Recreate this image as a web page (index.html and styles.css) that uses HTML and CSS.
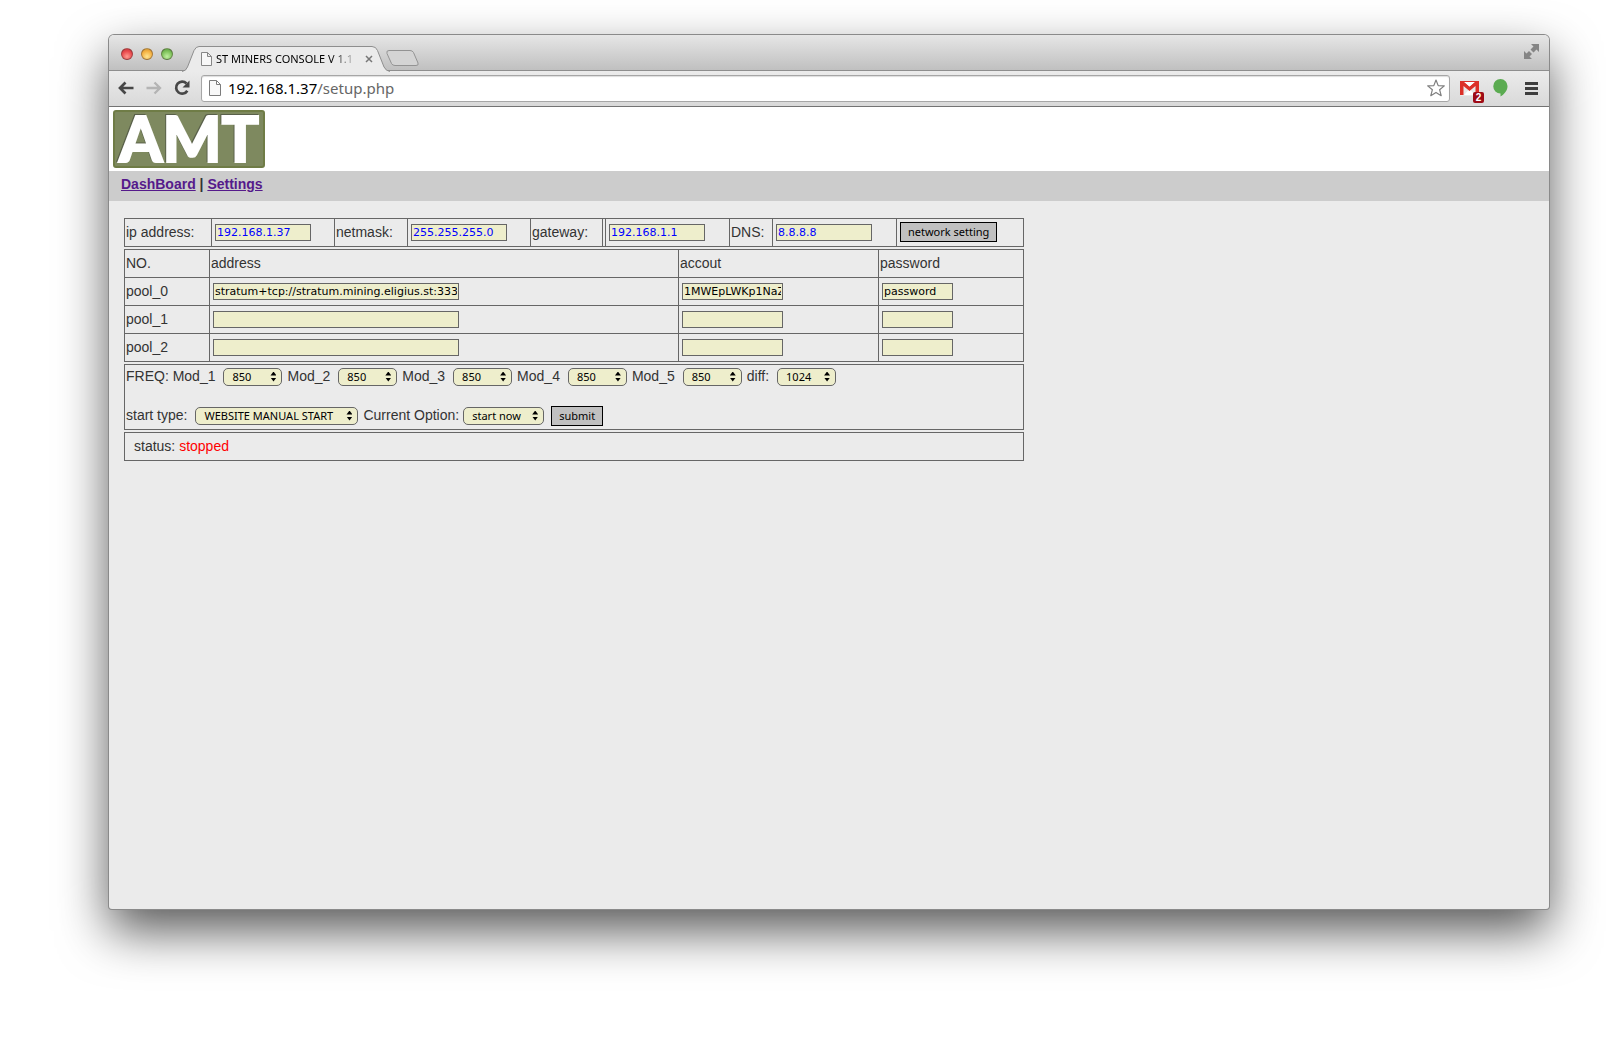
FILE: index.html
```
<!DOCTYPE html>
<html lang="en">
<head>
    <meta charset="UTF-8">
    <meta name="viewport" content="width=device-width, initial-scale=1.0">
    <title>ST MINERS CONSOLE V 1.1</title>
    <link rel="stylesheet" href="styles.css">
</head>
<body>
    <div class="window">
        <div class="titlebar">
            <div class="lights">
                <button class="light red" aria-label="Close window"></button>
                <button class="light yellow" aria-label="Minimize window"></button>
                <button class="light green" aria-label="Zoom window"></button>
            </div>
            <div class="tab">
                <svg class="tab-shape" width="208" height="26" viewBox="0 0 208 26">
                    <path d="M0 25.5 Q4 25 5.500 21 L12 4.500 Q14 .5 17 .5 H190 Q194 .5 195.500 4.500 L202 21 Q204 25 208 25.500 V26 H0 Z" fill="#ebebeb"/>
                    <path d="M0 25.5 Q4 25 5.500 21 L12 4.500 Q14 .5 17 .5 H190 Q194 .5 195.500 4.500 L202 21 Q204 25 208 25.500" fill="none" stroke="#8e8e8e"/>
                </svg>
                <svg class="tab-page" width="11" height="14" viewBox="0 0 11 14">
                    <path d="M.5 .5 H6.500 L10.500 4.500 V13.500 H.5 Z M6.500 .5 V4.500 H10.500" fill="#f7f7f7" stroke="#868686"/>
                </svg>
                <span class="tab-title">ST MINERS CONSOLE V 1.1</span>
                <button class="tab-close" aria-label="Close tab">
                    <svg width="8" height="8" viewBox="0 0 8 8"><path d="M1 1 L7 7 M7 1 L1 7" stroke="#777" stroke-width="1.500"/></svg>
                </button>
            </div>
            <button class="new-tab" aria-label="New tab">
                <svg width="33" height="17" viewBox="0 0 33 17">
                    <path d="M3 .5 H24 Q26.500 .5 27.500 2.500 L32 13 Q33 15.500 30 15.500 H9 Q6.500 15.500 5.500 13.500 L1 3.500 Q0 .5 3 .5 Z" fill="#d4d4d4" stroke="#939393"/>
                </svg>
            </button>
            <button class="fullscreen" aria-label="Full screen">
                <svg width="15" height="15" viewBox="0 0 15 15" fill="#858585">
                    <path d="M7 0 H15 V8 L12.500 5.500 L9.500 8.500 L6.500 5.500 L9.500 2.500 Z"/>
                    <path d="M8 15 H0 V7 L2.500 9.500 L5 7 L8 10 L5.500 12.500 Z"/>
                </svg>
            </button>
        </div>

        <div class="toolbar">
            <button class="tool back" aria-label="Back">
                <svg width="16" height="14" viewBox="0 0 16 14"><path d="M7.500 1.500 L2 7 L7.500 12.500 M2.500 7 H15.500" fill="none" stroke="#474747" stroke-width="2.700"/></svg>
            </button>
            <button class="tool forward" aria-label="Forward">
                <svg width="16" height="14" viewBox="0 0 16 14"><path d="M8.500 1.500 L14 7 L8.500 12.500 M13.500 7 H.5" fill="none" stroke="#b4b4b4" stroke-width="2.300"/></svg>
            </button>
            <button class="tool reload" aria-label="Reload">
                <svg width="16" height="16" viewBox="0 0 16 16">
                    <path d="M12.500 3.500 A6 6 0 1 0 13.300 10.700" fill="none" stroke="#474747" stroke-width="2.700"/>
                    <path d="M15.500 0.500 V7.500 H8.500 Z" fill="#474747"/>
                </svg>
            </button>
            <div class="omnibox">
                <svg width="12" height="16" viewBox="0 0 12 16">
                    <path d="M.5 .5 H7.500 L11.500 4.500 V15.500 H.5 Z M7.500 .5 V4.500 H11.500" fill="#f8f8f8" stroke="#7c7c7c"/>
                </svg>
                <span class="url"><span class="host">192.168.1.37</span>/setup.php</span>
                <svg width="18" height="18" viewBox="0 0 18 18">
                    <path d="M9 1 L11.200 6.600 L17.300 6.900 L12.600 10.700 L14.200 16.700 L9 13.400 L3.800 16.700 L5.400 10.700 L.7 6.900 L6.800 6.600 Z" fill="#fff" stroke="#7f7f7f" stroke-width="1.200" stroke-linejoin="round"/>
                </svg>
            </div>
            <button class="tool gmail" aria-label="Gmail, 2 unread">
                <svg width="19" height="15" viewBox="0 0 19 15">
                    <rect width="19" height="15" rx="1" fill="#e9e9e9"/>
                    <path d="M4 14 L9.500 8 L15 14 Z" fill="#fff"/>
                    <path d="M0 0 H3.500 L9.500 5.500 L15.500 0 H19 V14 H15.500 V5 L9.500 10 L3.500 5 V14 H0 Z" fill="#dc3028"/>
                    <path d="M3.500 .5 H15.500 L9.500 5.500 Z" fill="#fff"/>
                    <path d="M0 .5 H19" stroke="#dc3028"/>
                </svg>
                <span class="badge">2</span>
            </button>
            <button class="tool hangouts" aria-label="Hangouts">
                <svg width="15" height="18" viewBox="0 0 15 18"><path d="M7.500 0 A7 7 0 0 1 14.500 7.300 C14.500 12 11 15.500 7.500 17.500 V14.500 A7.200 7.200 0 0 1 7.500 0 Z" fill="#5bab51"/></svg>
            </button>
            <button class="tool menu" aria-label="Menu">
                <svg width="13" height="13" viewBox="0 0 13 13"><path d="M0 1.500 H13 M0 6.500 H13 M0 11.500 H13" stroke="#3e3e3e" stroke-width="3"/></svg>
            </button>
        </div>

        <div class="page">
            <header>
                <svg class="logo" width="152" height="58" viewBox="0 0 152 58" role="img" aria-label="AMT">
                    <rect x="1" y="1" width="150" height="56" rx="2" fill="#7e895f" stroke="#6f7c46" stroke-width="2"/>
                    <text class="logo-shade" x="75" y="51" text-anchor="middle">AMT</text>
                    <text class="logo-text" x="76" y="52" text-anchor="middle">AMT</text>
                </svg>
            </header>
            <nav>
                <a href="#">DashBoard</a> | <a href="#">Settings</a>
            </nav>

            <main>
                <table class="network">
                    <colgroup>
                        <col class="w-ip"><col class="w-field"><col class="w-mask"><col class="w-field"><col class="w-gateway"><col class="w-gap"><col class="w-wide"><col class="w-dns"><col class="w-wide"><col>
                    </colgroup>
                    <tr>
                        <td><label for="ip">ip address:</label></td>
                        <td><input type="text" id="ip" value="192.168.1.37"></td>
                        <td><label for="netmask">netmask:</label></td>
                        <td><input type="text" id="netmask" value="255.255.255.0"></td>
                        <td><label for="gateway">gateway:</label></td>
                        <td class="empty"></td>
                        <td><input type="text" id="gateway" value="192.168.1.1"></td>
                        <td><label for="dns">DNS:</label></td>
                        <td><input type="text" id="dns" value="8.8.8.8"></td>
                        <td><button class="btn">network setting</button></td>
                    </tr>
                </table>

                <table class="pools">
                    <colgroup>
                        <col class="w-no"><col class="w-address"><col class="w-account"><col>
                    </colgroup>
                    <tr>
                        <th>NO.</th>
                        <th>address</th>
                        <th>accout</th>
                        <th>password</th>
                    </tr>
                    <tr>
                        <td>pool_0</td>
                        <td><input type="text" class="address" aria-label="pool_0 address" value="stratum+tcp://stratum.mining.eligius.st:3334"></td>
                        <td><input type="text" class="account" aria-label="pool_0 account" value="1MWEpLWKp1NaZY"></td>
                        <td><input type="text" class="password" aria-label="pool_0 password" value="password"></td>
                    </tr>
                    <tr>
                        <td>pool_1</td>
                        <td><input type="text" class="address" aria-label="pool_1 address"></td>
                        <td><input type="text" class="account" aria-label="pool_1 account"></td>
                        <td><input type="text" class="password" aria-label="pool_1 password"></td>
                    </tr>
                    <tr>
                        <td>pool_2</td>
                        <td><input type="text" class="address" aria-label="pool_2 address"></td>
                        <td><input type="text" class="account" aria-label="pool_2 account"></td>
                        <td><input type="text" class="password" aria-label="pool_2 password"></td>
                    </tr>
                </table>

                <div class="box options">
                    <div class="line">
                        <label for="mod1">FREQ: Mod_1</label>
                        <span class="pick"><select id="mod1"><option>850</option></select></span>
                        <label for="mod2">Mod_2</label>
                        <span class="pick"><select id="mod2"><option>850</option></select></span>
                        <label for="mod3">Mod_3</label>
                        <span class="pick"><select id="mod3"><option>850</option></select></span>
                        <label for="mod4">Mod_4</label>
                        <span class="pick"><select id="mod4"><option>850</option></select></span>
                        <label for="mod5">Mod_5</label>
                        <span class="pick"><select id="mod5"><option>850</option></select></span>
                        <label for="diff">diff:</label>
                        <span class="pick"><select id="diff"><option>1024</option></select></span>
                    </div>
                    <div class="line">
                        <label for="start">start type:</label>
                        <span class="pick start"><select id="start"><option>WEBSITE MANUAL START</option></select></span>
                        <label for="option" class="tight">Current Option:</label>
                        <span class="pick option"><select id="option"><option>start now</option></select></span>
                        <button class="btn">submit</button>
                    </div>
                </div>

                <div class="box status">status: <span class="stopped">stopped</span></div>
            </main>
        </div>
    </div>
</body>
</html>
```
FILE: styles.css
```
* {
    box-sizing: border-box;
}

body {
    display: flex;
    min-height: 100vh;
    margin: 0;
    padding: 35px 57px 131px 109px;
    background-color: #ffffff;
    font-family: Arial, "Liberation Sans", sans-serif;
    font-size: 14px;
    color: #333333;
}

button {
    margin: 0;
    padding: 0;
    border: none;
    background: none;
}

svg {
    display: block;
}

/* browser window */
.window {
    flex: 1;
    min-width: 0;
    display: flex;
    flex-direction: column;
    overflow: hidden;
    border-radius: 5px 5px 3px 3px;
    background-color: #ebebeb;
    box-shadow: 0 0 0 1px #8a8a8a, 0 22px 50px rgba(0, 0, 0, 0.66);
}

.titlebar {
    display: flex;
    align-items: center;
    height: 36px;
    padding: 0 10px 0 12px;
    background: linear-gradient(#e6e6e6, #c0c0c0);
    border-bottom: 1px solid #8e8e8e;
}

.lights {
    display: flex;
    gap: 8px;
    padding-top: 2px;
}

.light {
    width: 12px;
    height: 12px;
    border: 1px solid rgba(60, 40, 40, 0.4);
    border-radius: 50%;
}

.red {
    background: radial-gradient(circle at 50% 75%, #ff9a90, #e8484c 60%, #b8363b);
}

.yellow {
    background: radial-gradient(circle at 50% 75%, #ffe590, #f4b040 60%, #c08a30);
}

.green {
    background: radial-gradient(circle at 50% 75%, #c0f0a0, #7cc058 60%, #559040);
}

.tab {
    position: relative;
    align-self: flex-end;
    display: flex;
    align-items: center;
    width: 208px;
    height: 25px;
    margin: 0 -5px -1px 9px;
    padding: 0 17px 0 19px;
}

.tab-shape {
    position: absolute;
    left: 0;
    top: 0;
}

.tab-page,
.tab-title,
.tab-close {
    position: relative;
}

.tab-title {
    flex: 1;
    margin: 0 6px 0 4px;
    white-space: nowrap;
    font-family: "Lucida Grande", "Noto Sans", sans-serif;
    font-size: 11px;
    color: #000000;
    -webkit-mask-image: linear-gradient(to right, #000 80%, transparent);
    mask-image: linear-gradient(to right, #000 80%, transparent);
}

.new-tab {
    margin: 12px 0 0 1px;
}

.fullscreen {
    margin: 0 0 3px auto;
}

.toolbar {
    display: flex;
    align-items: center;
    height: 36px;
    padding: 0 11px 1px 9px;
    background: linear-gradient(#ebebeb, #d9d9d9);
    border-bottom: 1px solid #737373;
}

.forward {
    margin-left: 12px;
}

.reload {
    margin: 0 11px 0 12px;
}

.omnibox {
    flex: 1;
    display: flex;
    align-items: center;
    gap: 7px;
    height: 27px;
    padding: 0 4px 0 7px;
    border: 1px solid #a6a6a6;
    border-radius: 3px;
    background-color: #ffffff;
    box-shadow: inset 0 1px 1px #dddddd;
}

.url {
    flex: 1;
    font-family: "Lucida Grande", "Noto Sans", sans-serif;
    font-size: 15px;
    color: #666666;
}

.host {
    color: #000000;
}

.gmail {
    position: relative;
    margin-left: 10px;
}

.badge {
    position: absolute;
    left: 13px;
    top: 11px;
    width: 11px;
    height: 11px;
    border-radius: 2px;
    background-color: #9e0b16;
    font: bold 10px/11px "Liberation Sans", sans-serif;
    color: #ffffff;
    text-align: center;
}

.hangouts {
    margin: 0 17px 0 14px;
}

/* console page */
header {
    height: 64px;
    padding: 3px 4px;
    background-color: #ffffff;
}

.logo-text,
.logo-shade {
    font-family: Lato, "Liberation Sans", sans-serif;
    font-size: 62px;
    font-weight: 900;
    stroke-width: 2px;
}

.logo-text {
    fill: #ffffff;
    stroke: #ffffff;
}

.logo-shade {
    fill: #59604a;
    stroke: #59604a;
}

nav {
    height: 30px;
    padding: 5px 12px;
    background-color: #cccccc;
    font-weight: bold;
    line-height: 16px;
}

nav a {
    color: #551a8b;
}

main {
    display: flex;
    flex-direction: column;
    gap: 2px;
    max-width: 930px;
    padding: 17px 15px;
}

table {
    width: 100%;
    table-layout: fixed;
    border-collapse: collapse;
}

th,
td {
    height: 28px;
    padding: 0 1px 2px;
    border: 1px solid #666666;
    font-weight: normal;
    text-align: left;
    white-space: nowrap;
}

td.empty {
    padding: 0;
}

.w-ip { width: 87px; }
.w-field { width: 123px; }
.w-mask { width: 73px; }
.w-gateway { width: 72px; }
.w-gap { width: 3px; }
.w-wide { width: 124px; }
.w-dns { width: 43px; }
.w-no { width: 85px; }
.w-address { width: 469px; }
.w-account { width: 200px; }

input,
select,
.btn {
    font-family: "Lucida Grande", "Noto Sans", sans-serif;
    font-size: 11px;
    color: #000000;
}

input {
    display: block;
    width: 96px;
    height: 17px;
    margin: 2px 2px 0;
    padding: 0 1px;
    border: 1px solid #666666;
    background-color: #eeeecc;
    font-family: "Lucida Grande", "DejaVu Sans", sans-serif;
}

.network input {
    color: #0000ff;
}

input.address {
    width: 246px;
}

input.account {
    width: 101px;
}

input.password {
    width: 71px;
}

.btn {
    height: 20px;
    margin: 0 2px;
    padding: 0 7px;
    border: 1px solid #000000;
    background-color: #c0c0c0;
    line-height: 16px;
}

td .btn {
    display: block;
}

.box {
    border: 1px solid #666666;
}

.options {
    display: flex;
    flex-direction: column;
    gap: 18px;
    padding: 1px 1px 3px;
}

.line {
    display: flex;
    align-items: center;
    height: 21px;
}

.line label {
    margin-right: 8px;
    padding-bottom: 2px;
}

.line .tight {
    margin-right: 4px;
}

.pick {
    position: relative;
    width: 59px;
    margin-right: 5px;
}

.pick.start {
    width: 163px;
}

.pick.option {
    width: 81px;
}

.pick select {
    display: block;
    width: 100%;
    height: 18px;
    padding: 0 14px 0 8px;
    border: 1px solid #666666;
    border-radius: 5px;
    background-color: #eeeecc;
    appearance: none;
    -webkit-appearance: none;
}

/* up and down arrows */
.pick::before,
.pick::after {
    content: "";
    position: absolute;
    right: 6px;
    width: 6px;
    height: 4px;
    background-color: #000000;
    pointer-events: none;
    z-index: 1;
}

.pick::before {
    top: 4px;
    clip-path: polygon(50% 0, 100% 100%, 0 100%);
}

.pick::after {
    bottom: 4px;
    clip-path: polygon(0 0, 100% 0, 50% 100%);
}

.status {
    height: 29px;
    padding: 0 9px;
    line-height: 27px;
}

.stopped {
    color: #ff0000;
}
```
